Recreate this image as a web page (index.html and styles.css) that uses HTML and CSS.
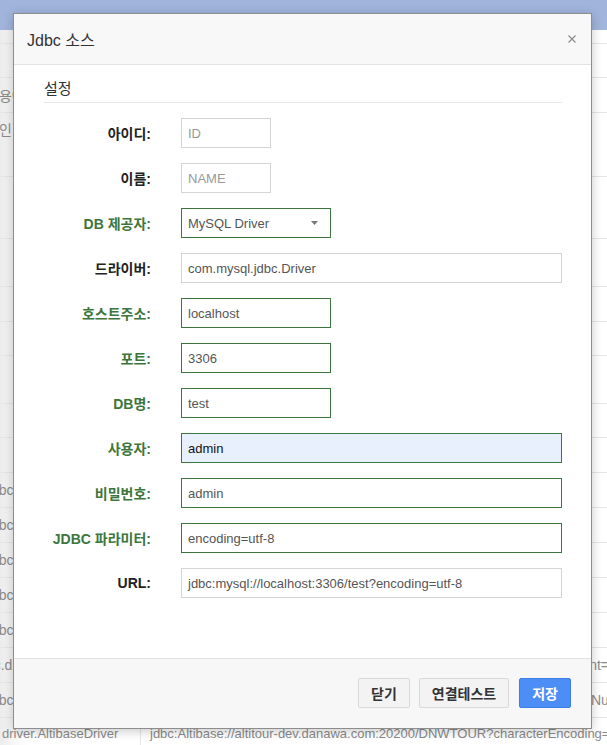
FILE: index.html
```html
<!DOCTYPE html>
<html lang="ko">
<head>
<meta charset="utf-8">
<title>Jdbc 소스</title>
<link rel="stylesheet" href="styles.css">
</head>
<body>
<div class="page">
  <div class="topbar"></div>
  <div class="grid">
    <div class="row h14"><div class="c1"></div><div class="c2"></div></div>
    <div class="row h34"><div class="c1"></div><div class="c2"></div></div>
    <div class="row h35"><div class="c1"><span class="ko-shift">공용어</span></div><div class="c2"></div></div>
    <div class="row h64"><div class="c1 top"><span class="ko-shift">송인</span></div><div class="c2"></div></div>
    <div class="row h62"><div class="c1 top"><span class="ko-shift">송</span></div><div class="c2"></div></div>
    <div class="row h48"><div class="c1"></div><div class="c2"></div></div>
    <div class="row h35"><div class="c1"></div><div class="c2"></div></div>
    <div class="row h34"><div class="c1"></div><div class="c2"></div></div>
    <div class="row h48"><div class="c1"></div><div class="c2"></div></div>
    <div class="row h34"><div class="c1"></div><div class="c2"></div></div>
    <div class="row h35"><div class="c1"></div><div class="c2"></div></div>
    <div class="row h35"><div class="c1"><span class="shift">com.mysql.jdbc.Driver</span></div><div class="c2"></div></div>
    <div class="row h35"><div class="c1"><span class="shift">com.mysql.jdbc.Driver</span></div><div class="c2"></div></div>
    <div class="row h35"><div class="c1"><span class="shift">com.mysql.jdbc.Driver</span></div><div class="c2"></div></div>
    <div class="row h35"><div class="c1"><span class="shift">com.mysql.jdbc.Driver</span></div><div class="c2"></div></div>
    <div class="row h35"><div class="c1"><span class="shift">com.mysql.jdbc.Driver</span></div><div class="c2"></div></div>
    <div class="row h35"><div class="c1"><span class="shift2">oracle.jdbc.driver.OracleDriver</span></div><div class="c2 end">jdbc:oracle:thin:@localhost:1521:orcl?useCursorFetch=true&amp;defaultRowPrefetch=100&amp;fixedString=true&amp;tnsent=</div></div>
    <div class="row h35"><div class="c1"><span class="shift">com.mysql.jdbc.Driver</span></div><div class="c2 end wider">jdbc:mysql://localhost:3306/test?useUnicode=true&amp;characterEncoding=utf-8&amp;zeroDateTimeBehavior=convertToNull</div></div>
    <div class="row h30"><div class="c1 plain">driver.AltibaseDriver</div><div class="c2">jdbc:Altibase://altitour-dev.danawa.com:20200/DNWTOUR?characterEncoding=UTF-8</div></div>
  </div>
</div>

<div class="modal">
  <div class="modal-header">
    <h4 class="modal-title">Jdbc 소스</h4>
    <button class="close" type="button" aria-label="닫기">
      <svg width="8" height="8" viewBox="0 0 8 8"><path d="M0.5 0.5 L7.5 7.5 M7.5 0.5 L0.5 7.5" stroke="#8c8c8c" stroke-width="1.2" fill="none"/></svg>
    </button>
  </div>
  <div class="modal-body">
    <div class="legend">설정</div>
    <div class="form">
      <label class="lbl">아이디:</label>
      <div class="field"><span class="input w90 ph">ID</span></div>

      <label class="lbl">이름:</label>
      <div class="field"><span class="input w90 ph">NAME</span></div>

      <label class="lbl ok">DB 제공자:</label>
      <div class="field"><span class="input w150 okb select">MySQL Driver<svg class="caret" width="7" height="4" viewBox="0 0 7 4"><path d="M0 0 H7 L3.5 4 Z" fill="#777"/></svg></span></div>

      <label class="lbl">드라이버:</label>
      <div class="field"><span class="input wide">com.mysql.jdbc.Driver</span></div>

      <label class="lbl ok">호스트주소:</label>
      <div class="field"><span class="input w150 okb">localhost</span></div>

      <label class="lbl ok">포트:</label>
      <div class="field"><span class="input w150 okb">3306</span></div>

      <label class="lbl ok">DB명:</label>
      <div class="field"><span class="input w150 okb">test</span></div>

      <label class="lbl ok">사용자:</label>
      <div class="field"><span class="input wide okb autofill">admin</span></div>

      <label class="lbl ok">비밀번호:</label>
      <div class="field"><span class="input wide okb">admin</span></div>

      <label class="lbl ok">JDBC 파라미터:</label>
      <div class="field"><span class="input wide okb">encoding=utf-8</span></div>

      <label class="lbl">URL:</label>
      <div class="field"><span class="input wide">jdbc:mysql://localhost:3306/test?encoding=utf-8</span></div>
    </div>
  </div>
  <div class="modal-footer">
    <button class="btn" type="button">닫기</button>
    <button class="btn" type="button">연결테스트</button>
    <button class="btn primary" type="button">저장</button>
  </div>
</div>
</body>
</html>
```
FILE: styles.css
```css
* { box-sizing: border-box; }
html, body { margin: 0; padding: 0; }
body {
  width: 607px;
  height: 745px;
  overflow: hidden;
  position: relative;
  background: #fff;
  font-family: "Liberation Sans", Arial, "Noto Sans CJK KR", sans-serif;
  color: #333;
}

/* background page */
.topbar { height: 30px; background: #a1b4db; }
.grid { display: flex; flex-direction: column; }
.row {
  display: flex;
  border-bottom: 1px solid #e6e6e6;
  font-size: 13px;
  color: #8a8a8a;
  background: linear-gradient(to right, #ececec 0, #f7f7f7 13px, #fff 30px);
}
.h14 { height: 14px; }
.h34 { height: 34px; }
.h35 { height: 35px; }
.h48 { height: 48px; }
.h62 { height: 62px; }
.h64 { height: 64px; }
.h30 { height: 30px; border-bottom: 0; }
.c1 {
  width: 141px;
  flex: none;
  overflow: hidden;
  white-space: nowrap;
  display: flex;
  align-items: center;
  border-right: 1px solid #e6e6e6;
  font-size: 14px;
}
.c1.top { align-items: flex-start; padding-top: 6px; }
.c1.plain { font-size: 13px; padding-left: 2px; }
.c2 {
  width: 468px;
  flex: none;
  overflow: hidden;
  white-space: nowrap;
  display: flex;
  align-items: center;
  padding-left: 9px;
  font-size: 13px;
}
.c2.end { justify-content: flex-end; font-size: 14px; }
.c2.wider { width: 474px; }
.shift { margin-left: -83px; }
.shift2 { margin-left: -67px; }
.ko-shift { margin-left: -14px; }

/* modal */
.modal {
  position: absolute;
  left: 13px;
  top: 13px;
  width: 579px;
  background: #fff;
  border: 1px solid #8d8d8d;
  box-shadow: 0 2px 10px rgba(0, 0, 0, 0.22);
}
.modal-header {
  height: 51px;
  background: #f8f8f8;
  border-bottom: 1px solid #e3e3e3;
  display: flex;
  align-items: center;
  justify-content: space-between;
  padding: 0 15px 0 13px;
}
.modal-title {
  margin: 0;
  font-size: 16px;
  font-weight: normal;
  color: #333;
}
.close {
  border: 0;
  background: transparent;
  padding: 0;
  width: 8px;
  height: 8px;
  display: flex;
}
.modal-body {
  padding: 12px 29px 60px 30px;
}
.legend {
  height: 26px;
  line-height: 24px;
  font-size: 15px;
  color: #333;
  border-bottom: 1px solid #e8e8e8;
  margin-bottom: 15px;
  padding-bottom: 2px;
}
.form {
  display: grid;
  grid-template-columns: 107px 1fr;
  column-gap: 30px;
  row-gap: 15px;
  grid-auto-rows: 30px;
}
.lbl {
  display: flex;
  align-items: center;
  justify-content: flex-end;
  font-size: 14px;
  font-weight: bold;
  color: #222;
}
.lbl.ok { color: #3c763d; }
.field { display: flex; align-items: stretch; }
.input {
  display: flex;
  align-items: center;
  height: 30px;
  border: 1px solid #d4d4d4;
  padding: 0 6px;
  font-size: 13px;
  color: #555;
  background: #fff;
  white-space: nowrap;
}
.ph { color: #999; }
.w90 { width: 90px; }
.w150 { width: 150px; }
.wide { width: 381px; }
.okb { border-color: #3c763d; }
.autofill { background: #e8f0fe; color: #111; }
.select { justify-content: space-between; padding-right: 12px; }
.caret { display: block; }

.modal-footer {
  border-top: 1px solid #e3e3e3;
  background: #f7f7f7;
  padding: 19px 20px 20px;
  display: flex;
  justify-content: flex-end;
  gap: 9px;
}
.btn {
  height: 30px;
  padding: 0 12px;
  font-family: inherit;
  font-size: 14px;
  font-weight: bold;
  color: #333;
  background: #f3f3f3;
  border: 1px solid #d9d9d9;
  border-radius: 2px;
}
.btn.primary {
  margin-left: 1px;
  background: #4d8ef6;
  border-color: #3c7ee8;
  color: #fff;
}
```
